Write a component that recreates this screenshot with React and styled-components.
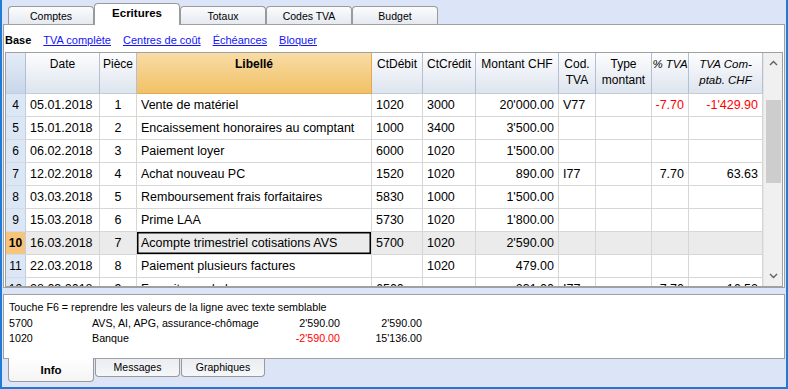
import React from 'react';
import styled, { createGlobalStyle } from 'styled-components';

const GlobalStyle = createGlobalStyle`
  html, body { margin: 0; padding: 0; background: #dbe5f7; }
  body { font-family: "Liberation Sans", Arial, sans-serif; color: #000; }
  * { box-sizing: border-box; }
`;

const Window = styled.div`
  width: 788px;
  height: 389px;
  background: #dbe5f7;
  border: 2px solid #1f7bd6;
  border-top: none;
  display: flex;
  flex-direction: column;
  overflow: hidden;
`;

const TabBar = styled.div`
  height: 24px;
  display: flex;
  align-items: flex-end;
  padding-left: 6px;
`;

const TopTab = styled.div`
  width: 86px;
  height: ${(p) => (p.$active ? 22 : 18)}px;
  margin-bottom: ${(p) => (p.$active ? -1 : 0)}px;
  position: relative;
  z-index: ${(p) => (p.$active ? 2 : 0)};
  border: 1px solid #9a9a9a;
  border-bottom: none;
  border-radius: 4px 4px 0 0;
  background: ${(p) => (p.$active ? '#fff' : 'linear-gradient(#fbfcfd, #e5e9f0)')};
  font-size: ${(p) => (p.$active ? '11.5px' : '10.5px')};
  font-weight: ${(p) => (p.$active ? 'bold' : 'normal')};
  display: flex;
  align-items: center;
  justify-content: center;
  padding-bottom: ${(p) => (p.$active ? 3 : 0)}px;
`;

const Panel = styled.div`
  margin: 0 1px;
  height: 264px;
  background: #fff;
  border: 1px solid #a0a0a0;
  display: flex;
  flex-direction: column;
  position: relative;
  z-index: 1;
`;

const SubNav = styled.div`
  height: 27px;
  display: flex;
  align-items: center;
  gap: 12px;
  padding: 3px 0 0 1px;
  font-size: 11px;
`;

const NavLabel = styled.span`
  font-weight: bold;
`;

const NavLink = styled.a`
  color: #1414f5;
  text-decoration: underline;
  cursor: pointer;
`;

const GridBox = styled.div`
  margin: 0 1px;
  height: 235px;
  border: 1px solid #a0a0a0;
  display: flex;
  overflow: hidden;
`;

const Table = styled.div`
  width: 757px;
  display: grid;
  grid-template-columns: 20px 74px 37px 235px 51px 53px 83px 37px 56px 37px 74px;
  grid-template-rows: 41px;
  grid-auto-rows: 23px;
  align-content: start;
`;

const HeadCell = styled.div`
  border-right: 1px solid ${(p) => (p.$main ? '#e2a94e' : '#b3c0d3')};
  border-bottom: 1px solid ${(p) => (p.$main ? '#e2a94e' : '#c3ccd9')};
  background: ${(p) =>
    p.$main
      ? 'linear-gradient(#f8dca6, #f1c166)'
      : p.$corner
      ? 'linear-gradient(#e4ecf8, #c9d6ea)'
      : 'linear-gradient(#fdfdfe, #dde4ee)'};
  font-size: ${(p) => (p.$italic ? '11.5px' : '12px')};
  line-height: 16px;
  padding-top: 3px;
  text-align: center;
  white-space: nowrap;
  overflow: hidden;
  font-weight: ${(p) => (p.$main ? 'bold' : 'normal')};
  font-style: ${(p) => (p.$italic ? 'italic' : 'normal')};
`;

const RowNum = styled.div`
  background: ${(p) => (p.$sel ? '#f6c47a' : '#dce7f6')};
  border-right: 1px solid #c2cee0;
  border-bottom: 1px solid #d4dbe6;
  font-size: 12px;
  font-weight: ${(p) => (p.$sel ? 'bold' : 'normal')};
  display: flex;
  align-items: center;
  justify-content: center;
`;

const Cell = styled.div`
  background: ${(p) => (p.$sel ? '#ebebeb' : '#fff')};
  border-right: 1px solid #d6d6d6;
  border-bottom: 1px solid #d6d6d6;
  font-size: 12.5px;
  padding: 0 4px;
  display: flex;
  align-items: center;
  justify-content: ${(p) => (p.$align === 'right' ? 'flex-end' : p.$align === 'center' ? 'center' : 'flex-start')};
  white-space: nowrap;
  overflow: hidden;
  color: ${(p) => (p.$red ? '#f00' : '#000')};
  box-shadow: ${(p) => (p.$current ? 'inset 0 0 0 1.5px #000' : 'none')};
`;

const Scrollbar = styled.div`
  width: 19px;
  background: #f0f0f0;
  display: flex;
  flex-direction: column;
  border-left: 1px solid #e4e4e4;
`;

const ArrowBtn = styled.div`
  height: 20px;
  display: flex;
  align-items: center;
  justify-content: center;
`;

const Track = styled.div`
  flex: 1;
  padding: 27px 1px 0 2px;
`;

const Thumb = styled.div`
  height: 83px;
  background: #cdcdcd;
`;

const InfoPanel = styled.div`
  margin: 6px 1px 0;
  height: 65px;
  background: #fff;
  border: 1px solid #a0a0a0;
  padding: 5px 5px 0;
  display: grid;
  grid-template-columns: 83px 168px 80px 82px;
  grid-auto-rows: 15.5px;
  font-size: 10.7px;
  line-height: 15.5px;
  align-content: start;
  position: relative;
  z-index: 1;
`;

const InfoLine = styled.div`
  grid-column: 1 / -1;
`;

const InfoCell = styled.div`
  text-align: ${(p) => (p.$right ? 'right' : 'left')};
  color: ${(p) => (p.$red ? '#f00' : '#000')};
  white-space: nowrap;
`;

const BottomBar = styled.div`
  display: flex;
  align-items: flex-start;
  padding-left: 6px;
  gap: 1px;
`;

const BottomTab = styled.div`
  width: ${(p) => p.$w}px;
  height: ${(p) => (p.$active ? 24 : 19)}px;
  margin-top: -1px;
  position: relative;
  z-index: ${(p) => (p.$active ? 2 : 0)};
  border: 1px solid #9a9a9a;
  border-top: none;
  border-radius: 0 0 4px 4px;
  background: ${(p) => (p.$active ? 'linear-gradient(#fff, #f4f4f4)' : 'linear-gradient(#e9ecf1, #f6f7f9)')};
  font-size: ${(p) => (p.$active ? '11.5px' : '10.5px')};
  font-weight: ${(p) => (p.$active ? 'bold' : 'normal')};
  display: flex;
  align-items: center;
  justify-content: center;
  padding-top: ${(p) => (p.$active ? 1 : 0)}px;
`;

const Chevron = ({ up }) => (
  <svg width="9" height="6" viewBox="0 0 9 6">
    <polyline
      points={up ? '1,5 4.5,1.5 8,5' : '1,1 4.5,4.5 8,1'}
      fill="none"
      stroke="#606060"
      strokeWidth="1.4"
    />
  </svg>
);

const aligns = ['left', 'center', 'left', 'left', 'left', 'right', 'left', 'left', 'right', 'right'];

const rows = [
  ['4', '05.01.2018', '1', 'Vente de matériel', '1020', '3000', "20'000.00", 'V77', '', '-7.70', "-1'429.90"],
  ['5', '15.01.2018', '2', 'Encaissement honoraires au comptant', '1000', '3400', "3'500.00", '', '', '', ''],
  ['6', '06.02.2018', '3', 'Paiement loyer', '6000', '1020', "1'500.00", '', '', '', ''],
  ['7', '12.02.2018', '4', 'Achat nouveau PC', '1520', '1020', '890.00', 'I77', '', '7.70', '63.63'],
  ['8', '03.03.2018', '5', 'Remboursement frais forfaitaires', '5830', '1000', "1'500.00", '', '', '', ''],
  ['9', '15.03.2018', '6', 'Prime LAA', '5730', '1020', "1'800.00", '', '', '', ''],
  ['10', '16.03.2018', '7', 'Acompte trimestriel cotisations AVS', '5700', '1020', "2'590.00", '', '', '', ''],
  ['11', '22.03.2018', '8', 'Paiement plusieurs factures', '', '1020', '479.00', '', '', '', ''],
  ['12', '28.03.2018', '9', 'Fournitures de bureau', '6500', '', '231.00', 'I77', '', '7.70', '16.52'],
];

export default function App() {
  return (
    <>
      <GlobalStyle />
      <Window>
        <TabBar>
          <TopTab>Comptes</TopTab>
          <TopTab $active>Ecritures</TopTab>
          <TopTab>Totaux</TopTab>
          <TopTab>Codes TVA</TopTab>
          <TopTab>Budget</TopTab>
        </TabBar>
        <Panel>
          <SubNav>
            <NavLabel>Base</NavLabel>
            <NavLink>TVA complète</NavLink>
            <NavLink>Centres de coût</NavLink>
            <NavLink>Échéances</NavLink>
            <NavLink>Bloquer</NavLink>
          </SubNav>
          <GridBox>
            <Table>
              <HeadCell $corner />
              <HeadCell>Date</HeadCell>
              <HeadCell>Pièce</HeadCell>
              <HeadCell $main>Libellé</HeadCell>
              <HeadCell>CtDébit</HeadCell>
              <HeadCell>CtCrédit</HeadCell>
              <HeadCell>Montant CHF</HeadCell>
              <HeadCell>Cod.<br />TVA</HeadCell>
              <HeadCell>Type<br />montant</HeadCell>
              <HeadCell $italic>% TVA</HeadCell>
              <HeadCell $italic>TVA Com-<br />ptab. CHF</HeadCell>
              {rows.map((r) => {
                const sel = r[0] === '10';
                const red = r[9].startsWith('-');
                return (
                  <React.Fragment key={r[0]}>
                    <RowNum $sel={sel}>{r[0]}</RowNum>
                    {r.slice(1).map((v, i) => (
                      <Cell
                        key={i}
                        $align={aligns[i]}
                        $sel={sel}
                        $current={sel && i === 2}
                        $red={red && i >= 8}
                      >
                        {v}
                      </Cell>
                    ))}
                  </React.Fragment>
                );
              })}
            </Table>
            <Scrollbar>
              <ArrowBtn><Chevron up /></ArrowBtn>
              <Track><Thumb /></Track>
              <ArrowBtn><Chevron /></ArrowBtn>
            </Scrollbar>
          </GridBox>
        </Panel>
        <InfoPanel>
          <InfoLine>Touche F6 = reprendre les valeurs de la ligne avec texte semblable</InfoLine>
          <InfoCell>5700</InfoCell>
          <InfoCell>AVS, AI, APG, assurance-chômage</InfoCell>
          <InfoCell $right>2'590.00</InfoCell>
          <InfoCell $right>2'590.00</InfoCell>
          <InfoCell>1020</InfoCell>
          <InfoCell>Banque</InfoCell>
          <InfoCell $right $red>-2'590.00</InfoCell>
          <InfoCell $right>15'136.00</InfoCell>
        </InfoPanel>
        <BottomBar>
          <BottomTab $active $w={86}>Info</BottomTab>
          <BottomTab $w={85}>Messages</BottomTab>
          <BottomTab $w={84}>Graphiques</BottomTab>
        </BottomBar>
      </Window>
    </>
  );
}
